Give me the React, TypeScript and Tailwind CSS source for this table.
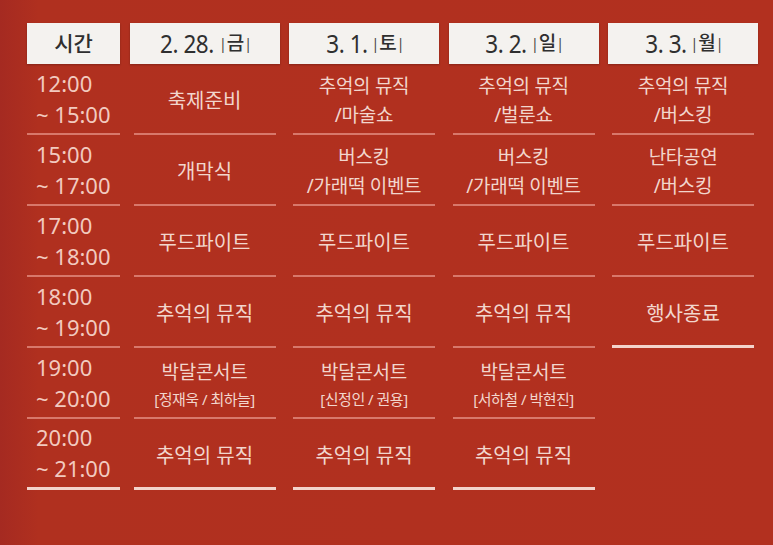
import React from "react";

type Cell = string[] | null;

interface Row {
  time: [string, string];
  cells: Cell[];
}

const days = [
  { date: "2. 28.", day: "금" },
  { date: "3. 1.", day: "토" },
  { date: "3. 2.", day: "일" },
  { date: "3. 3.", day: "월" },
];

const rows: Row[] = [
  {
    time: ["12:00", "~ 15:00"],
    cells: [["축제준비"], ["추억의 뮤직", "/마술쇼"], ["추억의 뮤직", "/벌룬쇼"], ["추억의 뮤직", "/버스킹"]],
  },
  {
    time: ["15:00", "~ 17:00"],
    cells: [["개막식"], ["버스킹", "/가래떡 이벤트"], ["버스킹", "/가래떡 이벤트"], ["난타공연", "/버스킹"]],
  },
  {
    time: ["17:00", "~ 18:00"],
    cells: [["푸드파이트"], ["푸드파이트"], ["푸드파이트"], ["푸드파이트"]],
  },
  {
    time: ["18:00", "~ 19:00"],
    cells: [["추억의 뮤직"], ["추억의 뮤직"], ["추억의 뮤직"], ["행사종료"]],
  },
  {
    time: ["19:00", "~ 20:00"],
    cells: [
      ["박달콘서트", "[정재욱 / 최하늘]"],
      ["박달콘서트", "[신정인 / 권용]"],
      ["박달콘서트", "[서하철 / 박현진]"],
      null,
    ],
  },
  {
    time: ["20:00", "~ 21:00"],
    cells: [["추억의 뮤직"], ["추억의 뮤직"], ["추억의 뮤직"], null],
  },
];

const font = { fontFamily: '"Noto Sans", "Noto Sans CJK KR", sans-serif' };

function HeaderBox({ children }: { children: React.ReactNode }) {
  return (
    <div className="h-[41px] flex items-center justify-center bg-[#f4f2ef] text-[#2f2f2f] shadow-[0_1px_2px_rgba(0,0,0,0.25)]">
      {children}
    </div>
  );
}

function EventCell({ cell, isLast }: { cell: Cell; isLast: boolean }) {
  if (!cell) return <div className="h-[71px]" />;
  const line = isLast ? "border-b-[3px] border-[#f3d3cb]" : "border-b-2 border-[#d8786b]";
  const twoLine = cell.length > 1;
  const small = twoLine && cell[1].startsWith("[");
  return (
    <div className={`h-[71px] mx-[4px] flex flex-col items-center justify-center pt-[4px] text-[#f2d6cd] ${line}`}>
      {cell.map((t, i) => (
        <span
          key={i}
          className={
            small && i === 1
              ? "text-[15px] leading-[24px] tracking-[-0.5px]"
              : twoLine
              ? "text-[19px] leading-[29px] tracking-[-0.3px]"
              : "text-[20px] leading-[29px]"
          }
        >
          {t}
        </span>
      ))}
    </div>
  );
}

export default function App() {
  // which row is the last for each date column
  const lastRow = [5, 5, 5, 3];

  return (
    <div
      className="w-[773px] h-[545px] overflow-hidden pt-[23px] pl-[27px] bg-[linear-gradient(90deg,#a52a21_0%,#b0301f_5%,#b2301f_100%)]"
      style={font}
    >
      <div className="grid grid-cols-[93px_150px_150px_150px_150px] gap-x-[9.5px]">
        <HeaderBox>
          <span className="text-[21px] font-medium">시간</span>
        </HeaderBox>
        {days.map((d) => (
          <HeaderBox key={d.date}>
            <span className="inline-block text-[25px] tracking-[-0.5px] scale-x-90">{d.date}</span>
            <span className="ml-[2px] text-[14px] text-[#444]">|</span>
            <span className="text-[19px] font-medium">{d.day}</span>
            <span className="text-[14px] text-[#444]">|</span>
          </HeaderBox>
        ))}

        {rows.map((r, ri) => (
          <React.Fragment key={r.time[0]}>
            <div
              className={`h-[71px] flex flex-col justify-center pl-[9px] text-[22px] leading-[31px] text-[#f2cabf] ${
                ri === rows.length - 1 ? "border-b-[3px] border-[#f3d3cb]" : "border-b-2 border-[#d8786b]"
              }`}
            >
              <span>{r.time[0]}</span>
              <span>{r.time[1]}</span>
            </div>
            {r.cells.map((c, ci) => (
              <EventCell key={ci} cell={c} isLast={ri === lastRow[ci]} />
            ))}
          </React.Fragment>
        ))}
      </div>
    </div>
  );
}
